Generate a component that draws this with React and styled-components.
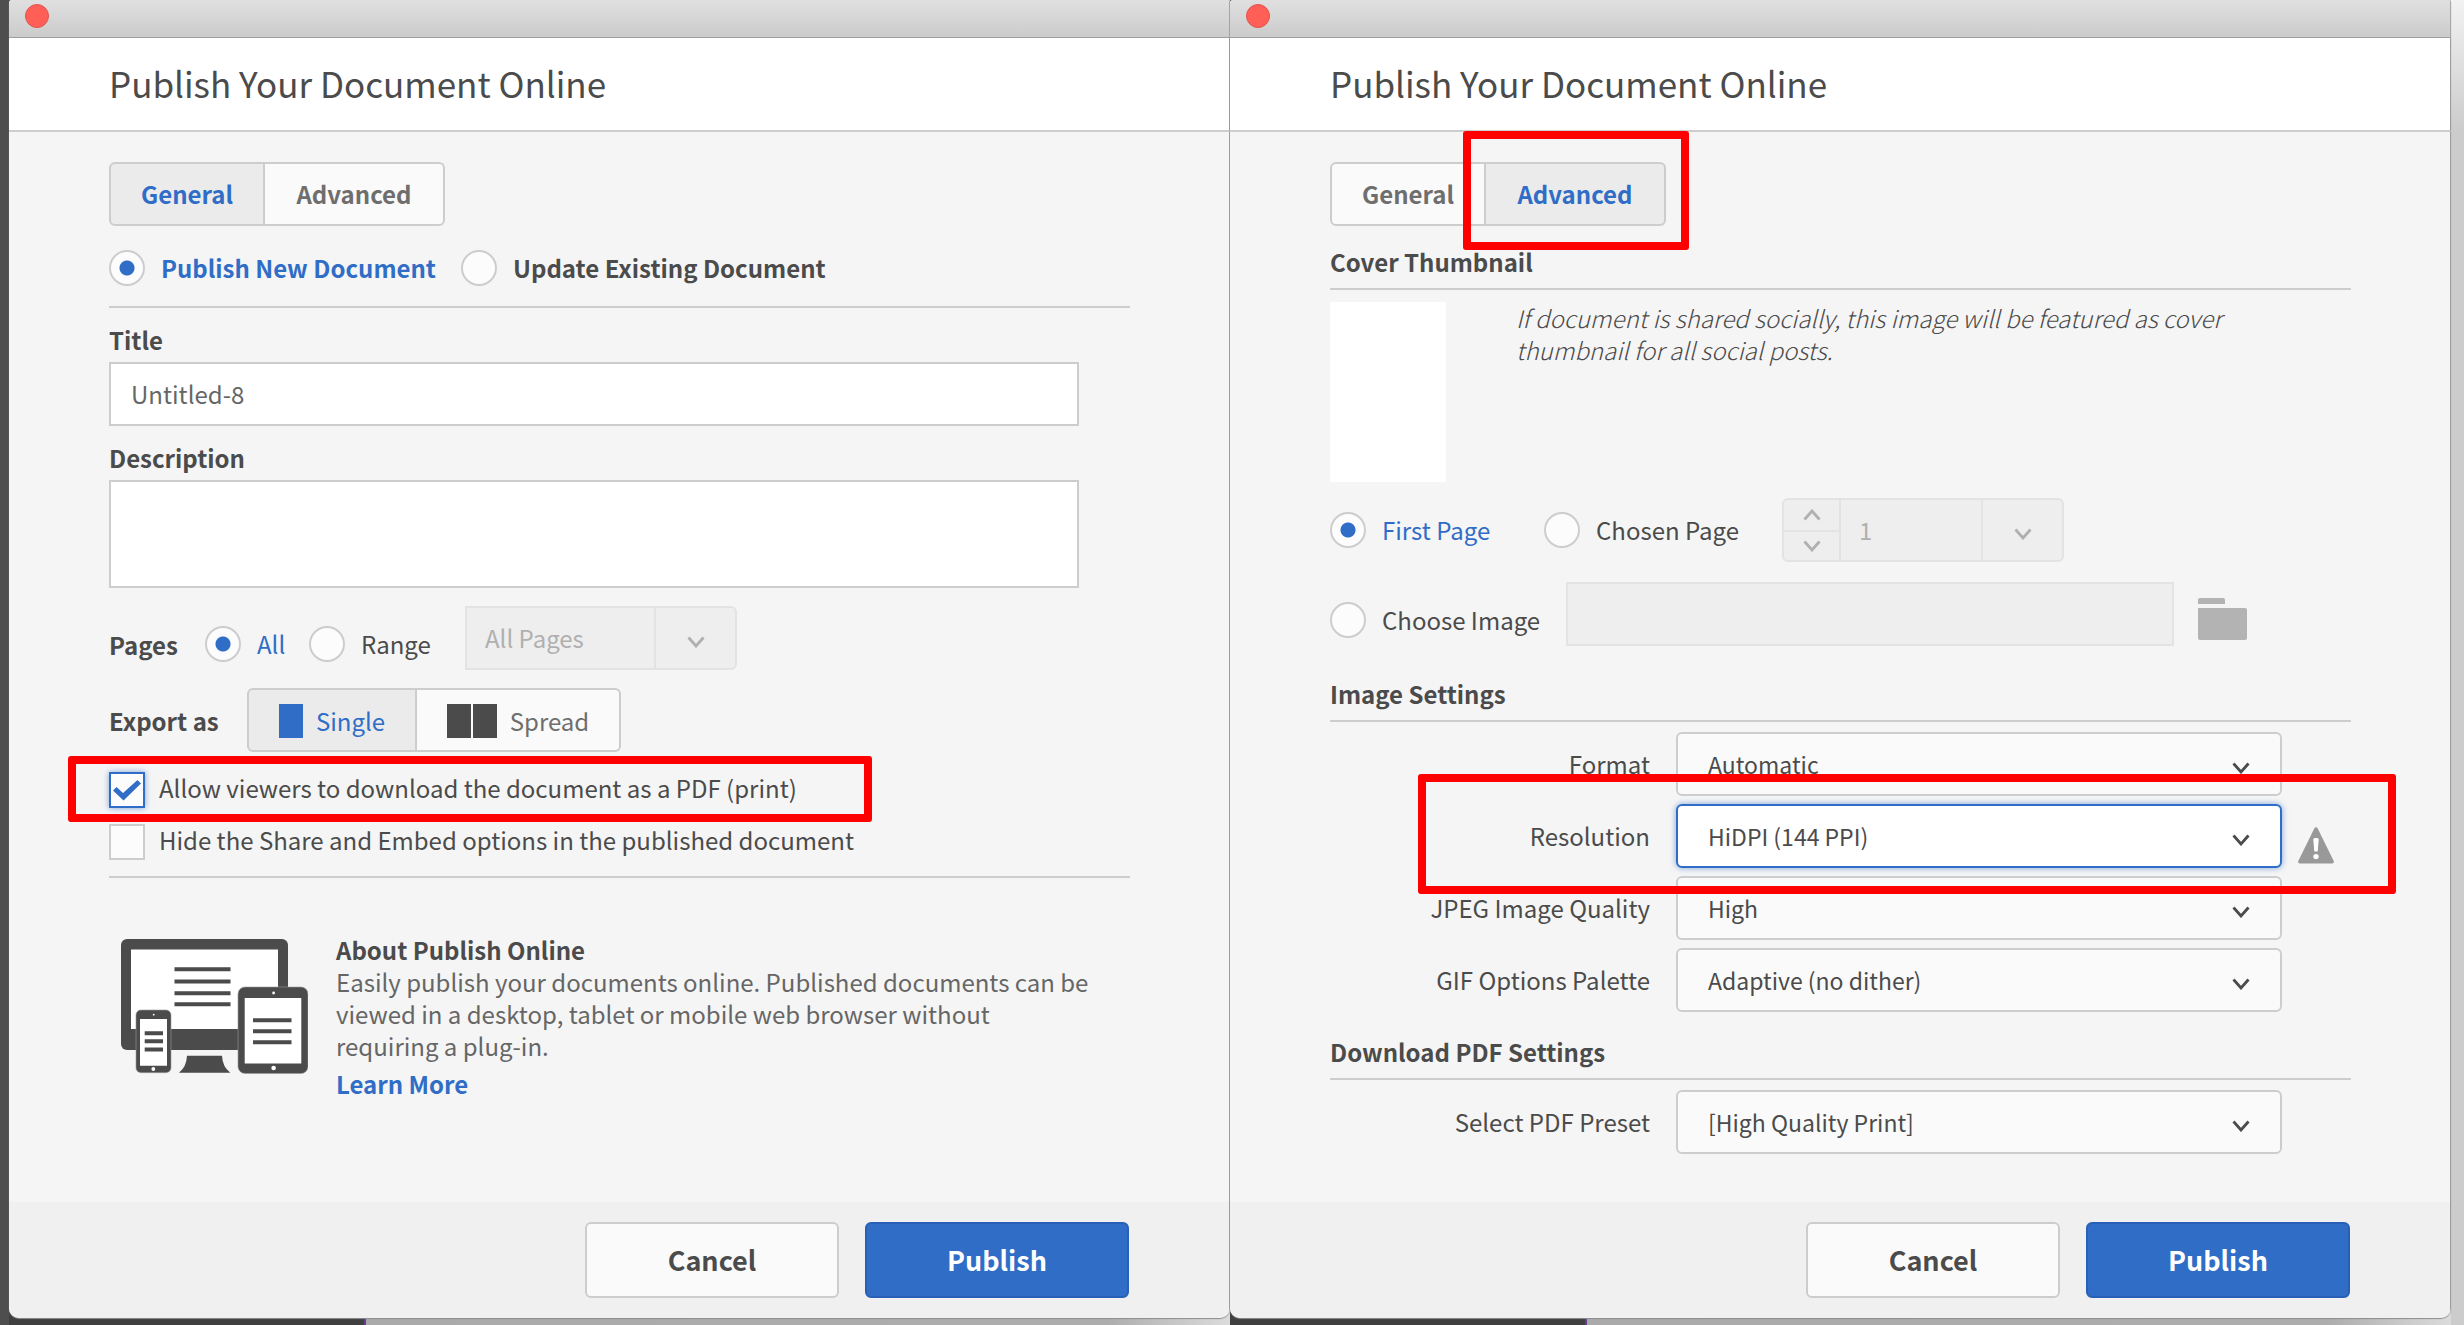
import React, { useState } from "react";
import styled, { createGlobalStyle, css } from "styled-components";

const blue = "#306dc7";
const ink = "#4b4b4b";
const line = "#cdcdcd";
const faintLine = "#e3e3e3";

const GlobalStyle = createGlobalStyle`
  *, *::before, *::after { box-sizing: border-box; }
  body {
    margin: 0;
    background: #cccccc;
    color: ${ink};
    font-family: "Noto Sans CJK SC", "Noto Sans", sans-serif;
    font-size: 24px;
    line-height: 32px;
  }
  button, input, select, textarea { font: inherit; color: inherit; margin: 0; }
`;

/* ---------- window chrome ---------- */

const Desktop = styled.main`
  min-height: 100vh;
  padding: 0 13px 0 9px;
  display: grid;
  grid-template-columns: 1fr 1fr;
  background: linear-gradient(90deg, #4e4e4e 9px, transparent 9px),
    linear-gradient(180deg, #f2f2f2, #cccccc 130px);
`;

const Backdrop = styled.div`
  display: flex;
  padding-bottom: 7px;
  background: linear-gradient(
    90deg,
    #3f3f3f 355px,
    #6a3d8c 355px,
    #6a3d8c 357px,
    #aaaaaa 357px,
    #adadad 90%,
    #dcdcdc
  );
`;

const Window = styled.section`
  flex: 1;
  min-width: 0;
  display: flex;
  flex-direction: column;
  border-radius: 3px 3px 10px 10px;
  background: #f5f5f5;
  box-shadow: inset -1px 0 0 #9d9d9d, 0 1px 1px #8d8d8d;
  overflow: hidden;
`;

const TitleBar = styled.div`
  height: 38px;
  padding: 4px 16px;
  border-bottom: 1px solid #9f9f9f;
  border-right: 1px solid #a8a8a8;
  background: linear-gradient(#e0e0e0, #cbcbcb);
`;

const CloseDot = styled.button`
  display: block;
  width: 24px;
  height: 24px;
  padding: 0;
  border: 1px solid #e2544c;
  border-radius: 50%;
  background: #ff5f57;
`;

const Header = styled.header`
  height: 94px;
  padding: 0 100px 2px;
  display: flex;
  align-items: center;
  border-bottom: 2px solid ${line};
  border-right: 1px solid #9d9d9d;
  background: #ffffff;
`;

const Heading = styled.h1`
  margin: 0;
  font-size: 35px;
  line-height: 48px;
  font-weight: 400;
`;

const Body = styled.div`
  flex: 1;
  padding: 30px 100px 0;
`;

const Footer = styled.footer`
  height: 116px;
  padding: 20px 100px;
  display: flex;
  justify-content: flex-end;
  gap: 26px;
  background: #f0f0f0;
  border-right: 1px solid #9d9d9d;
`;

const FooterButton = styled.button`
  width: ${(p) => (p.$primary ? 264 : 254)}px;
  height: 76px;
  border: 2px solid ${(p) => (p.$primary ? "#2860b8" : line)};
  border-radius: 6px;
  background: ${(p) => (p.$primary ? blue : "#fafafa")};
  color: ${(p) => (p.$primary ? "#ffffff" : ink)};
  font-size: 27px;
  font-weight: 700;
`;

/* ---------- shared form parts ---------- */

const Segments = styled.div`
  display: inline-flex;
  height: 64px;
`;

const Slot = styled.div`
  position: relative;
  display: flex;
`;

const Segment = styled.button`
  min-width: ${(p) => p.$width}px;
  padding: ${(p) => (p.$bold ? 0 : "2px 0 0")};
  display: flex;
  align-items: center;
  justify-content: center;
  gap: 13px;
  border: 2px solid ${line};
  background: ${(p) => (p.$active ? "#ebebeb" : "#fafafa")};
  color: ${(p) => (p.$active ? blue : "#6e6e6e")};
  font-weight: ${(p) => (p.$bold ? 700 : 400)};
  border-radius: ${(p) => (p.$last ? "0 6px 6px 0" : "6px 0 0 6px")};
  ${(p) => p.$last && css`border-left: 0;`}
`;

const PageGlyph = styled.span`
  display: flex;
  gap: 2px;
  i {
    width: 24px;
    height: 34px;
    background: ${(p) => p.$color};
  }
`;

const Option = styled.label`
  display: flex;
  align-items: center;
  gap: 16px;
  min-width: ${(p) => p.$width || 0}px;
  font-weight: ${(p) => (p.$bold ? 700 : 400)};
  color: ${(p) => (p.$checked ? blue : ink)};
`;

const Radio = styled.input`
  appearance: none;
  flex: none;
  width: 36px;
  height: 36px;
  border: 2px solid ${line};
  border-radius: 50%;
  background: #fcfcfc;
  &:checked {
    background: radial-gradient(circle, ${blue} 7px, #fcfcfc 8px);
  }
`;

const CheckRow = styled.label`
  position: relative;
  width: fit-content;
  display: flex;
  align-items: flex-start;
  gap: 14px;
  margin-top: ${(p) => p.$top}px;
`;

const CheckFrame = styled.span`
  display: grid;
  > * { grid-area: 1 / 1; }
  svg { pointer-events: none; }
`;

const Checkbox = styled.input`
  appearance: none;
  width: 36px;
  height: 36px;
  border: 2px solid ${line};
  background: #fcfcfc;
  &:checked {
    border-color: ${blue};
    box-shadow: 0 0 6px rgba(48, 109, 199, 0.6);
  }
`;

const Rule = styled.hr`
  height: 2px;
  margin: ${(p) => p.$top}px 0 0;
  border: 0;
  background: ${line};
`;

const Row = styled.div`
  display: flex;
  align-items: center;
  gap: ${(p) => p.$gap || 0}px;
  min-height: ${(p) => p.$height || 64}px;
  margin-top: ${(p) => p.$top || 0}px;
`;

const Lowered = styled.div`
  display: flex;
  align-items: center;
  padding-top: 12px;
`;

const RowLabel = styled.span`
  width: ${(p) => p.$width}px;
  padding-top: 2px;
  font-weight: 700;
`;

const FieldLabel = styled.label`
  display: block;
  margin: 16px 0 6px;
  font-weight: 700;
`;

const fieldBox = css`
  display: block;
  width: 95%;
  border: 2px solid ${line};
  border-radius: 0;
  background: #ffffff;
  padding: 0 20px 2px;
  resize: none;
`;

const TextField = styled.input`
  ${fieldBox}
  height: 64px;
  color: #666666;
`;

const TextArea = styled.textarea`
  ${fieldBox}
  height: 108px;
`;

/* ---------- disabled combo and stepper ---------- */

const Combo = styled.div`
  display: flex;
  height: 64px;
  border: 2px solid ${faintLine};
  border-radius: ${(p) => (p.$round ? "6px" : "0 6px 6px 0")};
  background: #eeeeee;
`;

const ComboInput = styled.input`
  width: ${(p) => p.$width}px;
  padding: 0 18px;
  border: 0;
  border-right: 2px solid ${faintLine};
  background: transparent;
  color: #b0b0b0;
`;

const ComboButton = styled.button`
  width: 79px;
  padding: 8px 0 0;
  display: flex;
  align-items: center;
  justify-content: center;
  border: 0;
  background: transparent;
  color: #b0b0b0;
`;

const Spinner = styled.div`
  width: 57px;
  display: grid;
  grid-template-rows: 1fr 1fr;
  border-right: 2px solid ${faintLine};
`;

const SpinButton = styled.button`
  padding: 0;
  display: flex;
  align-items: center;
  justify-content: center;
  border: 0;
  background: transparent;
  color: #b0b0b0;
  & + & { border-top: 2px solid ${faintLine}; }
`;

/* ---------- about block ---------- */

const About = styled.div`
  display: grid;
  grid-template-columns: 187px minmax(0, 758px);
  gap: 28px;
  margin: 56px 0 0 12px;
  svg { margin-top: 5px; }
`;

const AboutTitle = styled.h2`
  margin: 0;
  font-size: 24px;
  line-height: 32px;
  font-weight: 700;
`;

const AboutText = styled.p`
  margin: 0 0 6px;
  color: #666666;
`;

const Link = styled.a`
  color: ${blue};
  font-weight: 700;
  text-decoration: none;
`;

/* ---------- advanced tab ---------- */

const SectionTitle = styled.h2`
  margin: ${(p) => p.$top}px 0 0;
  padding-bottom: 10px;
  border-bottom: 2px solid ${line};
  font-size: 24px;
  line-height: 32px;
  font-weight: 700;
`;

const Cover = styled.div`
  display: flex;
  gap: 70px;
  margin-top: 12px;
`;

const Thumbnail = styled.div`
  flex: none;
  width: 116px;
  height: 180px;
  background: #ffffff;
`;

const Hint = styled.p`
  margin: 0;
  max-width: 740px;
  font-style: italic;
  font-weight: 300;
`;

const ImagePath = styled.input`
  flex: 0 1 608px;
  min-width: 0;
  height: 64px;
  border: 2px solid ${faintLine};
  background: #eeeeee;
`;

const FolderButton = styled.button`
  display: flex;
  padding: 10px 0 0;
  border: 0;
  background: transparent;
`;

const Settings = styled.div`
  position: relative;
  display: grid;
  gap: 8px;
  margin-top: 10px;
`;

const Setting = styled.div`
  position: relative;
  display: grid;
  grid-template-columns: 320px minmax(0, 606px) 36px;
  align-items: center;
  column-gap: 26px;
  > svg { margin: 18px 0 0 -10px; }
`;

const SettingLabel = styled.label`
  text-align: right;
`;

const SelectFrame = styled.div`
  display: grid;
  align-items: center;
  > * { grid-area: 1 / 1; }
  > svg {
    justify-self: end;
    margin: 8px 32px 0 0;
    pointer-events: none;
  }
`;

const Select = styled.select`
  appearance: none;
  width: 100%;
  height: 64px;
  padding: 0 60px 0 30px;
  border: 2px solid ${(p) => (p.$focus ? blue : line)};
  border-radius: 6px;
  background: ${(p) => (p.$focus ? "#ffffff" : "#fafafa")};
  box-shadow: ${(p) => (p.$focus ? "0 0 6px rgba(48, 109, 199, 0.6)" : "none")};
  font-size: 23px;
`;

/* Red call-out frame laid over the control that it points at. */
const Callout = styled.span`
  position: absolute;
  z-index: 2;
  inset: ${(p) => p.$inset};
  border: 8px solid #ff0000;
  border-radius: 3px;
  pointer-events: none;
`;

/* ---------- drawings ---------- */

const Chevron = ({ up, color = "currentColor" }) => (
  <svg width="18" height="12" viewBox="0 0 18 12" fill="none" aria-hidden="true">
    <path
      d={up ? "M1.5 10.5 9 2l7.5 8.5" : "M1.5 1.5 9 10l7.5-8.5"}
      stroke={color}
      strokeWidth="2.8"
    />
  </svg>
);

const CheckMark = () => (
  <svg width="36" height="36" viewBox="0 0 36 36" aria-hidden="true">
    <path d="M4 18.5 7.5 15l6.500 6L28.500 8 32 11.500 14.500 28.500z" fill={blue} />
  </svg>
);

const Folder = () => (
  <svg width="49" height="42" viewBox="0 0 49 42" fill="#b3b3b3" aria-hidden="true">
    <path d="M0 6V2q0-2 2-2h23q2 0 2 2v4z" />
    <path d="M0 10h47q2 0 2 2v28q0 2-2 2H2q-2 0-2-2z" />
  </svg>
);

const Warning = () => (
  <svg width="36" height="37" viewBox="0 0 36 37" aria-hidden="true">
    <path d="M16.300 1.500q1.700-2.500 3.400 0L35.700 34q.8 2.500-1.700 2.500H2Q-.5 36.500.3 34z" fill="#999999" />
    <path d="M15.300 12.500q0-1.500 1.500-1.500h2.400q1.500 0 1.500 1.500L19.700 24.500h-3.400z" fill="#ffffff" />
    <circle cx="18" cy="29.600" r="2.700" fill="#ffffff" />
  </svg>
);

const Devices = () => (
  <svg width="187" height="135" viewBox="0 0 187 135" fill={ink} aria-hidden="true">
    <rect width="167" height="111" rx="6" />
    <path fill="#ffffff" d="M10 10.500h147v79.500H10z" />
    <path d="M53.500 28.300h56v4h-56zM53.500 40.600h56v4h-56zM53.500 52.200h56v4h-56zM53.500 63.200h56v4h-56z" />
    <path d="M66 116.700h35q.5 11 8.300 17H58q7.500-6 8-17z" />
    <rect x="117" y="48" width="70" height="86.500" rx="7" stroke="#9a9a9a" strokeWidth=".6" />
    <path fill="#ffffff" d="M123.700 59h56.600v65.500h-56.600z" />
    <path d="M132 79.200h38.500v4H132zM132 90.200h38.500v4H132zM132 101.200h38.500v4H132z" />
    <circle cx="152.600" cy="54" r="1.400" fill="#ffffff" />
    <circle cx="152.600" cy="129" r="2.300" fill="#ffffff" />
    <rect x="15" y="71" width="35" height="62.700" rx="5" stroke="#9a9a9a" strokeWidth=".6" />
    <path fill="#ffffff" d="M19 80h27v46.700H19z" />
    <path d="M23.700 92.200H42v4H23.700zM23.700 100.300H42v4H23.700zM23.700 108.400H42v4H23.700z" />
    <circle cx="32.700" cy="75.700" r=".9" fill="#ffffff" />
    <circle cx="32.300" cy="130" r="1.900" fill="#ffffff" />
  </svg>
);

/* ---------- composition ---------- */

function Dialog({ children }) {
  return (
    <Backdrop>
      <Window>
        <TitleBar>
          <CloseDot type="button" aria-label="Close" />
        </TitleBar>
        <Header>
          <Heading>Publish Your Document Online</Heading>
        </Header>
        <Body>{children}</Body>
        <Footer>
          <FooterButton type="button">Cancel</FooterButton>
          <FooterButton type="button" $primary>Publish</FooterButton>
        </Footer>
      </Window>
    </Backdrop>
  );
}

function Tabs({ advanced }) {
  return (
    <Segments>
      <Segment type="button" $bold $width={156} $active={!advanced}>General</Segment>
      <Slot>
        <Segment type="button" $bold $last $width={180} $active={advanced}>Advanced</Segment>
        {advanced && <Callout $inset="-31px -23px -24px -23px" />}
      </Slot>
    </Segments>
  );
}

function RadioOption({ name, value, state, onChange, children, ...rest }) {
  const checked = state === value;
  return (
    <Option $checked={checked} {...rest}>
      <Radio type="radio" name={name} checked={checked} onChange={() => onChange(value)} />
      {children}
    </Option>
  );
}

function SelectSetting({ id, label, value, focus, children }) {
  return (
    <Setting>
      <SettingLabel htmlFor={id}>{label}</SettingLabel>
      <SelectFrame>
        <Select id={id} $focus={focus} defaultValue={value}>
          <option>{value}</option>
        </Select>
        <Chevron color={ink} />
      </SelectFrame>
      {children}
    </Setting>
  );
}

function GeneralDialog() {
  const [mode, setMode] = useState("new");
  const [pages, setPages] = useState("all");
  return (
    <Dialog>
      <Tabs />
      <Row $height={36} $top={24} $gap={24}>
        <RadioOption name="mode" value="new" state={mode} onChange={setMode} $bold $width={328}>
          Publish New Document
        </RadioOption>
        <RadioOption name="mode" value="update" state={mode} onChange={setMode} $bold>
          Update Existing Document
        </RadioOption>
      </Row>
      <Rule $top={20} />
      <FieldLabel htmlFor="title">Title</FieldLabel>
      <TextField id="title" defaultValue="Untitled-8" />
      <FieldLabel htmlFor="description">Description</FieldLabel>
      <TextArea id="description" />
      <Row $top={18}>
        <Lowered>
          <RowLabel $width={96}>Pages</RowLabel>
          <RadioOption name="pages" value="all" state={pages} onChange={setPages} $width={104}>
            All
          </RadioOption>
          <RadioOption name="pages" value="range" state={pages} onChange={setPages} $width={156}>
            Range
          </RadioOption>
        </Lowered>
        <Combo>
          <ComboInput aria-label="Page range" disabled defaultValue="All Pages" $width={189} />
          <ComboButton type="button" disabled aria-label="Show page ranges">
            <Chevron />
          </ComboButton>
        </Combo>
      </Row>
      <Row $top={18}>
        <RowLabel $width={138}>Export as</RowLabel>
        <Segments>
          <Segment type="button" $active $width={170}>
            <PageGlyph $color={blue}><i /></PageGlyph>
            Single
          </Segment>
          <Segment type="button" $last $width={204}>
            <PageGlyph $color={ink}><i /><i /></PageGlyph>
            Spread
          </Segment>
        </Segments>
      </Row>
      <CheckRow $top={20}>
        <CheckFrame>
          <Checkbox type="checkbox" defaultChecked />
          <CheckMark />
        </CheckFrame>
        Allow viewers to download the document as a PDF (print)
        <Callout $inset="-16px -75px -14px -41px" />
      </CheckRow>
      <CheckRow $top={16}>
        <Checkbox type="checkbox" />
        Hide the Share and Embed options in the published document
      </CheckRow>
      <Rule $top={16} />
      <About>
        <Devices />
        <div>
          <AboutTitle>About Publish Online</AboutTitle>
          <AboutText>
            Easily publish your documents online. Published documents can be viewed in a desktop,
            tablet or mobile web browser without requiring a plug-in.
          </AboutText>
          <Link href="#learn-more">Learn More</Link>
        </div>
      </About>
    </Dialog>
  );
}

function AdvancedDialog() {
  const [cover, setCover] = useState("first");
  return (
    <Dialog>
      <Tabs advanced />
      <SectionTitle $top={20}>Cover Thumbnail</SectionTitle>
      <Cover>
        <Thumbnail />
        <Hint>
          If document is shared socially, this image will be featured as cover thumbnail for all
          social posts.
        </Hint>
      </Cover>
      <Row $top={16}>
        <RadioOption name="cover" value="first" state={cover} onChange={setCover} $width={214}>
          First Page
        </RadioOption>
        <RadioOption name="cover" value="chosen" state={cover} onChange={setCover} $width={238}>
          Chosen Page
        </RadioOption>
        <Combo $round>
          <Spinner>
            <SpinButton type="button" disabled aria-label="Next page"><Chevron up /></SpinButton>
            <SpinButton type="button" disabled aria-label="Previous page"><Chevron /></SpinButton>
          </Spinner>
          <ComboInput aria-label="Cover page" disabled defaultValue="1" $width={142} />
          <ComboButton type="button" disabled aria-label="Show pages">
            <Chevron />
          </ComboButton>
        </Combo>
      </Row>
      <Row $top={20} $gap={24}>
        <Lowered>
          <RadioOption name="cover" value="image" state={cover} onChange={setCover} $width={212}>
            Choose Image
          </RadioOption>
        </Lowered>
        <ImagePath aria-label="Image file" disabled />
        <FolderButton type="button" aria-label="Browse"><Folder /></FolderButton>
      </Row>
      <SectionTitle $top={32}>Image Settings</SectionTitle>
      <Settings>
        <SelectSetting id="format" label="Format" value="Automatic" />
        <SelectSetting id="resolution" label="Resolution" value="HiDPI (144 PPI)" focus>
          <Warning />
          <Callout $inset="-30px -45px -26px 88px" />
        </SelectSetting>
        <SelectSetting id="jpeg" label="JPEG Image Quality" value="High" />
        <SelectSetting id="gif" label="GIF Options Palette" value="Adaptive (no dither)" />
      </Settings>
      <SectionTitle $top={24}>Download PDF Settings</SectionTitle>
      <Settings>
        <SelectSetting id="preset" label="Select PDF Preset" value="[High Quality Print]" />
      </Settings>
    </Dialog>
  );
}

export default function App() {
  return (
    <>
      <GlobalStyle />
      <Desktop>
        <GeneralDialog />
        <AdvancedDialog />
      </Desktop>
    </>
  );
}
